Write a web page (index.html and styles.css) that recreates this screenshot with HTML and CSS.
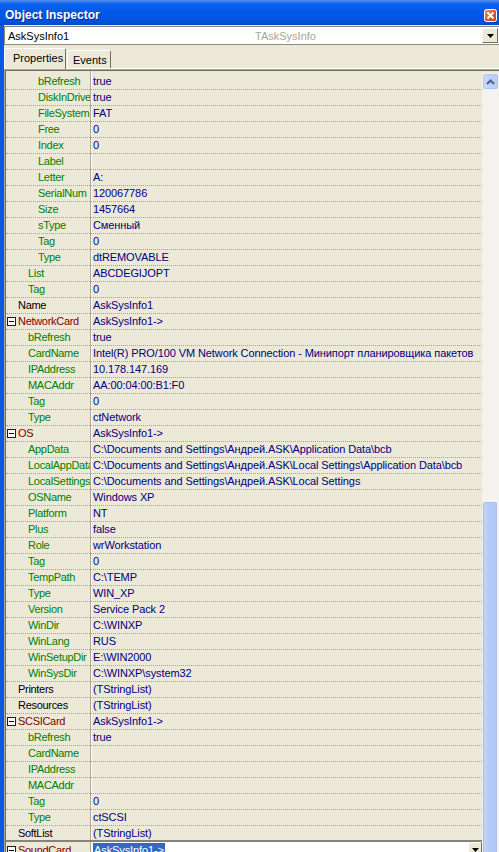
FILE: index.html
```html
<!DOCTYPE html>
<html lang="en">
<head>
    <meta charset="UTF-8">
    <title>Object Inspector</title>
    <link rel="stylesheet" href="styles.css">
</head>
<body>
    <div class="window">
        <div class="titlebar">
            <span class="title">Object Inspector</span>
            <svg class="close" width="13" height="13" viewBox="0 0 13 13">
                <defs>
                    <linearGradient id="cg" x1="0" y1="0" x2="1" y2="1">
                        <stop offset="0" stop-color="#f29a7c"/>
                        <stop offset="0.5" stop-color="#e2582f"/>
                        <stop offset="1" stop-color="#c8421e"/>
                    </linearGradient>
                </defs>
                <rect x="0.5" y="0.5" width="12" height="12" rx="2" fill="url(#cg)" stroke="#fff"/>
                <path d="M3.5 3.5 L9.5 9.5 M9.5 3.5 L3.5 9.5" stroke="#fff" stroke-width="1.8"/>
            </svg>
        </div>

        <div class="frame">
            <div class="combo">
                <span class="combo-name">AskSysInfo1</span>
                <span class="combo-type">TAskSysInfo</span>
                <span class="drop-btn">
                    <svg width="7" height="4" viewBox="0 0 7 4"><path d="M0 0 H7 L3.5 4 Z" fill="#000"/></svg>
                </span>
            </div>

            <div class="tabs">
                <div class="tab active">Properties</div>
                <div class="tab">Events</div>
            </div>

            <div class="grid">
                <div class="rows">
                    <div class="row l2"><span class="name">bRefresh</span><span class="value">true</span></div>
                    <div class="row l2"><span class="name">DiskInDrive</span><span class="value">true</span></div>
                    <div class="row l2"><span class="name">FileSystem</span><span class="value">FAT</span></div>
                    <div class="row l2"><span class="name">Free</span><span class="value">0</span></div>
                    <div class="row l2"><span class="name">Index</span><span class="value">0</span></div>
                    <div class="row l2"><span class="name">Label</span><span class="value"></span></div>
                    <div class="row l2"><span class="name">Letter</span><span class="value">A:</span></div>
                    <div class="row l2"><span class="name">SerialNum</span><span class="value">120067786</span></div>
                    <div class="row l2"><span class="name">Size</span><span class="value">1457664</span></div>
                    <div class="row l2"><span class="name">sType</span><span class="value">Сменный</span></div>
                    <div class="row l2"><span class="name">Tag</span><span class="value">0</span></div>
                    <div class="row l2"><span class="name">Type</span><span class="value">dtREMOVABLE</span></div>
                    <div class="row l1"><span class="name">List</span><span class="value">ABCDEGIJOPT</span></div>
                    <div class="row l1"><span class="name">Tag</span><span class="value">0</span></div>
                    <div class="row l0"><span class="name">Name</span><span class="value">AskSysInfo1</span></div>

                    <div class="row obj"><span class="name"><i class="box"></i>NetworkCard</span><span class="value">AskSysInfo1-&gt;</span></div>
                    <div class="row l1"><span class="name">bRefresh</span><span class="value">true</span></div>
                    <div class="row l1"><span class="name">CardName</span><span class="value">Intel(R) PRO/100 VM Network Connection - Минипорт планировщика пакетов</span></div>
                    <div class="row l1"><span class="name">IPAddress</span><span class="value">10.178.147.169</span></div>
                    <div class="row l1"><span class="name">MACAddr</span><span class="value">AA:00:04:00:B1:F0</span></div>
                    <div class="row l1"><span class="name">Tag</span><span class="value">0</span></div>
                    <div class="row l1"><span class="name">Type</span><span class="value">ctNetwork</span></div>

                    <div class="row obj"><span class="name"><i class="box"></i>OS</span><span class="value">AskSysInfo1-&gt;</span></div>
                    <div class="row l1"><span class="name">AppData</span><span class="value">C:\Documents and Settings\Андрей.ASK\Application Data\bcb</span></div>
                    <div class="row l1"><span class="name">LocalAppData</span><span class="value">C:\Documents and Settings\Андрей.ASK\Local Settings\Application Data\bcb</span></div>
                    <div class="row l1"><span class="name">LocalSettings</span><span class="value">C:\Documents and Settings\Андрей.ASK\Local Settings</span></div>
                    <div class="row l1"><span class="name">OSName</span><span class="value">Windows XP</span></div>
                    <div class="row l1"><span class="name">Platform</span><span class="value">NT</span></div>
                    <div class="row l1"><span class="name">Plus</span><span class="value">false</span></div>
                    <div class="row l1"><span class="name">Role</span><span class="value">wrWorkstation</span></div>
                    <div class="row l1"><span class="name">Tag</span><span class="value">0</span></div>
                    <div class="row l1"><span class="name">TempPath</span><span class="value">C:\TEMP</span></div>
                    <div class="row l1"><span class="name">Type</span><span class="value">WIN_XP</span></div>
                    <div class="row l1"><span class="name">Version</span><span class="value">Service Pack 2</span></div>
                    <div class="row l1"><span class="name">WinDir</span><span class="value">C:\WINXP</span></div>
                    <div class="row l1"><span class="name">WinLang</span><span class="value">RUS</span></div>
                    <div class="row l1"><span class="name">WinSetupDir</span><span class="value">E:\WIN2000</span></div>
                    <div class="row l1"><span class="name">WinSysDir</span><span class="value">C:\WINXP\system32</span></div>
                    <div class="row l0"><span class="name">Printers</span><span class="value">(TStringList)</span></div>
                    <div class="row l0"><span class="name">Resources</span><span class="value">(TStringList)</span></div>

                    <div class="row obj"><span class="name"><i class="box"></i>SCSICard</span><span class="value">AskSysInfo1-&gt;</span></div>
                    <div class="row l1"><span class="name">bRefresh</span><span class="value">true</span></div>
                    <div class="row l1"><span class="name">CardName</span><span class="value"></span></div>
                    <div class="row l1"><span class="name">IPAddress</span><span class="value"></span></div>
                    <div class="row l1"><span class="name">MACAddr</span><span class="value"></span></div>
                    <div class="row l1"><span class="name">Tag</span><span class="value">0</span></div>
                    <div class="row l1"><span class="name">Type</span><span class="value">ctSCSI</span></div>
                    <div class="row l0"><span class="name">SoftList</span><span class="value">(TStringList)</span></div>

                    <div class="row obj edit">
                        <span class="name"><i class="box"></i>SoundCard</span>
                        <span class="value"><span class="selected">AskSysInfo1-&gt;</span>
                            <span class="drop-btn small">
                                <svg width="7" height="4" viewBox="0 0 7 4"><path d="M0 0 H7 L3.5 4 Z" fill="#000"/></svg>
                            </span>
                        </span>
                    </div>
                </div>

                <div class="scrollbar">
                    <div class="scroll-btn">
                        <svg width="9" height="6" viewBox="0 0 9 6"><path d="M1 5 L4.5 1.5 L8 5" fill="none" stroke="#4d6185" stroke-width="2"/></svg>
                    </div>
                    <div class="scroll-space"></div>
                    <div class="thumb"></div>
                </div>
            </div>
        </div>
    </div>
</body>
</html>
```

FILE: styles.css
```css
/* Global Styles */
body {
    margin: 0;
    padding: 0;
    width: 499px;
    height: 852px;
    overflow: hidden;
    background-color: #ece9d8;
    font-family: "Liberation Sans", Arial, sans-serif;
    font-size: 11px;
}

.window {
    display: flex;
    flex-direction: column;
    height: 852px;
}

/* Caption */
.titlebar {
    flex: none;
    height: 21px;
    padding: 4px 2px 0 5px;
    display: flex;
    align-items: center;
    background: linear-gradient(#6e8fe0 0, #3a84f6 1px, #0a62ee 4px, #0058e8 12px, #0055e2 20px, #0048c6 25px);
}

.title {
    color: #fff;
    font-weight: bold;
    font-size: 12px;
    text-shadow: 1px 1px #0b2a8c;
}

.close {
    margin-left: auto;
    margin-top: 1px;
}

/* Body */
.frame {
    flex: 1;
    display: flex;
    flex-direction: column;
    border-left: 4px solid #0a58e4;
    min-height: 0;
}

.combo {
    flex: none;
    margin-top: 1px;
    height: 17px;
    display: flex;
    align-items: center;
    background-color: #fffffb;
    border: 1px solid #8d8a7f;
    border-right: none;
}

.combo-name {
    padding-left: 3px;
    width: 247px;
}

.combo-type {
    color: #a8a69c;
}

.drop-btn {
    margin-left: auto;
    margin-right: 1px;
    width: 14px;
    height: 13px;
    display: flex;
    align-items: center;
    justify-content: center;
    background-color: #ece9d8;
    border: 1px solid;
    border-color: #fff #716f64 #716f64 #fff;
}

/* Tabs */
.tabs {
    flex: none;
    height: 23px;
    display: flex;
    align-items: flex-end;
    border-bottom: 1px solid #fff;
}

.tab {
    height: 17px;
    border: 1px solid;
    border-color: #fff #716f64 transparent #fff;
    border-bottom: none;
    border-radius: 2px 2px 0 0;
}

.tab.active {
    height: 20px;
    line-height: 19px;
    width: 52px;
    padding: 0 0 0 8px;
    margin-bottom: -1px;
    background-color: #ece9d8;
}

.tab:not(.active) {
    width: 37px;
    padding: 0 0 0 5px;
    line-height: 19px;
    margin-left: 1px;
}

/* Property grid */
.grid {
    flex: 1;
    display: flex;
    min-height: 0;
    border-top: 1px solid #aca899;
    border-left: 1px solid #aca899;
    box-shadow: inset 1px 1px #716f64;
    padding: 1px 0 0 1px;
}

.rows {
    width: 476px;
    flex: none;
    padding-top: 3px;
    letter-spacing: -0.1px;
    background: linear-gradient(to right, transparent 84px, #aca899 84px, #aca899 85px, #fff 85px, #fff 86px, transparent 86px);
}

.row {
    display: flex;
    height: 15px;
    line-height: 15px;
    border-bottom: 1px dotted #a29e98;
    white-space: nowrap;
}

.name {
    flex: none;
    width: 84px;
    box-sizing: border-box;
    overflow: hidden;
    color: #008000;
    letter-spacing: -0.3px;
    display: flex;
    align-items: center;
}

.value {
    flex: 1;
    padding-left: 3px;
    color: #000080;
    overflow: hidden;
}

.l0 .name { padding-left: 12px; color: #000; }
.l1 .name { padding-left: 22px; }
.l2 .name { padding-left: 32px; }

.obj .name {
    padding-left: 1px;
    color: #800000;
}

.box {
    flex: none;
    width: 7px;
    height: 7px;
    margin-right: 2px;
    border: 1px solid #1c1c1c;
    background: linear-gradient(#fff 3px, #000 3px, #000 4px, #fff 4px);
    background-size: 5px 7px;
    background-repeat: no-repeat;
    background-position: 1px 0;
    background-color: #fff;
}

/* Row being edited */
.row.edit {
    height: 17px;
    border-top: 2px solid #86837a;
    border-bottom: none;
    margin-top: -2px;
}

.edit .value {
    display: flex;
    margin-left: 1px;
    padding-left: 2px;
    background-color: #fff;
}

.selected {
    align-self: flex-start;
    height: 14px;
    line-height: 14px;
    margin-top: 1px;
    padding: 0 1px;
    background-color: #316ac5;
    color: #fff;
}

.drop-btn.small {
    margin-right: 0;
    width: 12px;
    height: 14px;
}

/* Scroll bar */
.scrollbar {
    width: 17px;
    flex: none;
    margin-top: 2px;
    display: flex;
    flex-direction: column;
    background-color: #f4f3ee;
}

.scroll-btn {
    flex: none;
    height: 13px;
    margin: 1px;
    display: flex;
    align-items: center;
    justify-content: center;
    background: linear-gradient(to right, #c8d7fc, #b7cbf8);
    border: 1px solid #b2c6f2;
    border-radius: 2px;
}

.scroll-space {
    flex: none;
    height: 412px;
}

.thumb {
    flex: 1;
    margin: 0 2px 0 1px;
    background: linear-gradient(to right, #c2d3fb, #b6cbf8 40%, #b0c6f6);
    border: 1px solid #a9bff0;
    border-bottom: none;
    border-radius: 2px 2px 0 0;
}
```
